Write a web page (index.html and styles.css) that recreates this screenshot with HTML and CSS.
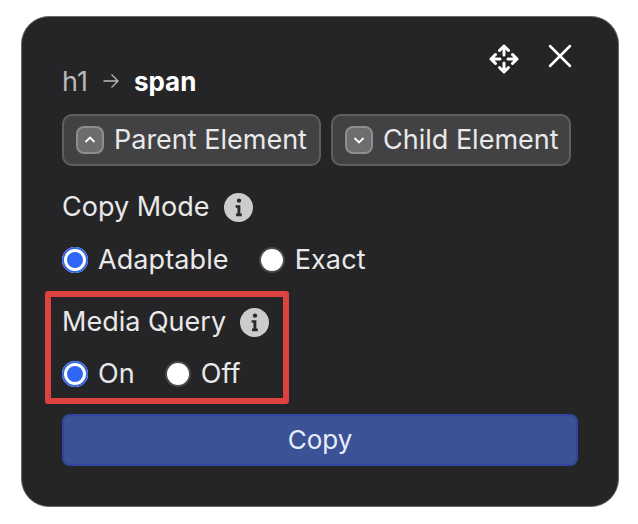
FILE: index.html
```html
<!DOCTYPE html><html>
<head>
  <meta name="viewport" content="width=device-width, initial-scale=1.0">
  <title>Copy element</title>
  <link rel="stylesheet" href="styles.css">
</head><body>

<div class="panel">
  <div class="top">
    <div class="crumb">
      <span class="crumb-from">h1</span>
      <svg class="crumb-arrow" viewBox="0 0 18 18"><path d="M1.500 9H16M9.500 2.500 16 9l-6.500 6.500"/></svg>
      <b>span</b>
    </div>
    <div class="tools">
      <svg class="move" viewBox="0 0 30 30">
        <path d="M15 2V11M10.500 6.500 15 2 19.500 6.500M15 19V28M10.500 23.500 15 28 19.500 23.500M2 15H11M6.500 10.500 2 15 6.500 19.500M19 15H28M23.500 10.500 28 15 23.500 19.500"/>
      </svg>
      <svg class="close" viewBox="0 0 24 24"><path d="M2 2 22 22M22 2 2 22"/></svg>
    </div>
  </div>

  <div class="nav">
    <button class="nav-btn nav-parent" type="button">
      <span class="key"><svg viewBox="0 0 12 12"><path d="M1.500 8 6 3.500 10.500 8"/></svg></span>
      Parent Element
    </button>
    <button class="nav-btn nav-child" type="button">
      <span class="key"><svg viewBox="0 0 12 12"><path d="M1.500 4 6 8.500 10.500 4"/></svg></span>
      Child Element
    </button>
  </div>

  <div class="group group-copy">
    <p class="title">Copy Mode
      <svg class="info" viewBox="0 0 28 28"><circle cx="14" cy="14" r="14"/><path d="M14.500 5.200a2.100 2.100 0 1 1 0 4.200 2.100 2.100 0 0 1 0-4.200ZM11.200 11.800H15.800V19.800H17.200V22.400H11.600V19.800H13V14.200H11.200Z"/></svg>
    </p>
    <div class="choices">
      <label class="choice"><input type="radio" name="mode" checked> Adaptable</label>
      <label class="choice"><input type="radio" name="mode"> Exact</label>
    </div>
  </div>

  <div class="group group-media">
    <p class="title">Media Query
      <svg class="info" viewBox="0 0 28 28"><circle cx="14" cy="14" r="14"/><path d="M14.500 5.200a2.100 2.100 0 1 1 0 4.200 2.100 2.100 0 0 1 0-4.200ZM11.200 11.800H15.800V19.800H17.200V22.400H11.600V19.800H13V14.200H11.200Z"/></svg>
    </p>
    <div class="choices">
      <label class="choice"><input type="radio" name="media" checked> On</label>
      <label class="choice"><input type="radio" name="media"> Off</label>
    </div>
  </div>

  <button class="copy" type="button">Copy</button>
</div>

</body></html>
```

FILE: styles.css
```css
* { box-sizing: border-box; }
html, body { height: 100%; }
body {
  margin: 0;
  padding: 16px 19px 17px 21px;
  background: #fff;
  font-family: Inter, "Liberation Sans", Arial, sans-serif;
  font-size: 27px;
  line-height: 32px;
  color: #e9e9ea;
}
p { margin: 0; }
svg { display: block; }

.panel {
  height: 491px;
  padding: 24px 40px 0 40px;
  background: #252527;
  border: 1px solid #6a6a6c;
  border-radius: 28px;
}

.top { display: flex; justify-content: space-between; height: 73px; }
.crumb { display: flex; align-items: center; gap: 14px; height: 32px; margin-top: 25px; }
.crumb-from { color: #b9b9bb; }
.crumb-arrow { width: 18px; height: 18px; fill: none; stroke: #b9b9bb; stroke-width: 1.3; margin-top: -2px; }
.crumb b { color: #fff; font-size: 26px; font-weight: 700; }
.tools { display: flex; align-items: flex-start; gap: 29px; margin-right: 6px; }
.move { width: 30px; height: 30px; margin-top: 3px; fill: none; stroke: #fff; stroke-width: 3; stroke-linecap: round; stroke-linejoin: round; }
.close { width: 24px; height: 24px; margin-top: 3px; fill: none; stroke: #fff; stroke-width: 2.500; stroke-linecap: round; }

.nav { display: flex; gap: 10px; }
.nav-btn {
  display: flex;
  align-items: center;
  gap: 10px;
  height: 52px;
  padding: 0 0 0 12px;
  border: 2px solid #5f5f61;
  border-radius: 10px;
  background: #424244;
  font: inherit;
  color: #e9e9ea;
  white-space: nowrap;
}
.nav-parent { width: 259px; }
.nav-child { width: 240px; }
.key {
  display: flex;
  align-items: center;
  justify-content: center;
  width: 28px;
  height: 28px;
  border: 2px solid #8e8e90;
  border-radius: 8px;
  background: #6d6d70;
}
.key svg { width: 12px; height: 12px; fill: none; stroke: #fff; stroke-width: 1.800; }

.title { display: flex; align-items: center; gap: 14px; height: 32px; }
.info { width: 29px; height: 29px; }
.info circle { fill: #cbccce; }
.info path { fill: #2a2a2c; }

.choices { display: flex; gap: 30px; height: 32px; margin-top: 21px; letter-spacing: .1px; }
.choice { display: flex; align-items: center; gap: 10px; }
.choice input {
  appearance: none;
  width: 26px;
  height: 26px;
  margin: 0;
  border: 2px solid #4a4a4c;
  border-radius: 50%;
  background: #fff;
}
.choice input:checked {
  border: 0;
  background: #2f66f6;
  box-shadow: inset 0 0 0 2px #3565e0, inset 0 0 0 5px #fff;
}

.group-copy { margin-top: 25px; }
.group-media {
  width: 244px;
  height: 113px;
  margin: 15px 0 10px -17px;
  padding: 9px 0 0 11px;
  border: 6px solid #dc4340;
  border-radius: 3px;
}
.group-media .choices { margin-top: 20px; }

.copy {
  display: block;
  width: 516px;
  height: 52px;
  padding: 0;
  border: 2px solid #2f45a0;
  border-radius: 8px;
  background: #3b5296;
  font: inherit;
  font-size: 26px;
  color: #e6eefb;
}
```
